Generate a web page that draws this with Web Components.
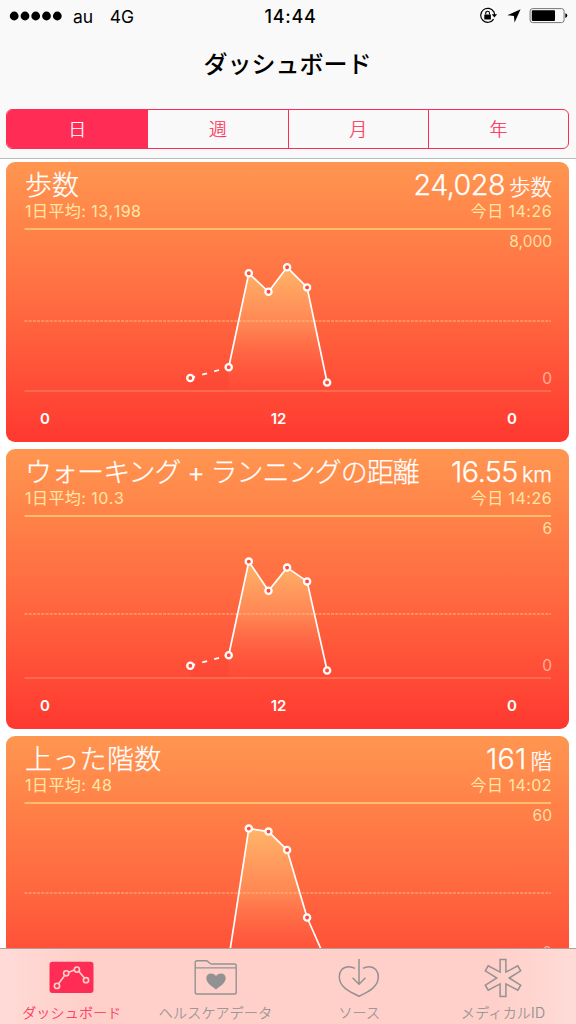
<!DOCTYPE html>
<html lang="ja">
<head>
<meta charset="utf-8">
<title>ダッシュボード</title>
<style>
    html, body {
        margin: 0;
        height: 100%;
    }

    body {
        background: #fff;
        overflow: hidden;
        font-family: Inter, "Noto Sans CJK JP", sans-serif;
        --pink: #ff2d55;
    }
</style>
</head>
<body>
<health-app>
    <status-bar slot="top" carrier="au" network="4G" time="14:44"></status-bar>
    <nav-title slot="top">ダッシュボード</nav-title>
    <segmented-control slot="top" items="日,週,月,年" selected="0"></segmented-control>

    <health-card name="歩数" value="24,028" unit="歩数" average="13,198" date="14:26" max="8,000"
        mid="92" points="165.8,149 204.2,138.3 224.3,44.3 244,62.8 262.6,38.3 282.6,58.4 302.6,153.5"></health-card>
    <health-card style="--name-spacing: -0.95px" name="ウォーキング + ランニングの距離" value="16.55" unit="km" average="10.3" date="14:26" max="6"
        mid="98" points="165.8,149.7 204.2,139.2 224.3,45.6 244,74.7 262.6,51.6 282.6,65.4 302.6,154.5"></health-card>
    <health-card style="--name-spacing: 0.3px; --value-spacing: 0.2px" name="上った階数" value="161" unit="階" average="48" date="14:02" max="60"
        mid="90" points="165.8,160 204.2,156 224.3,25.6 244,28.6 262.6,47 282.6,114.5 302.6,160"></health-card>

    <tab-item slot="tabs" icon="dashboard" active>ダッシュボード</tab-item>
    <tab-item slot="tabs" icon="data">ヘルスケアデータ</tab-item>
    <tab-item slot="tabs" icon="source">ソース</tab-item>
    <tab-item slot="tabs" icon="medical">メディカルID</tab-item>
</health-app>

<script>
class BaseElement extends HTMLElement {

    constructor() {
        super();
        this.attachShadow({ mode: 'open' });
    }

    connectedCallback() {
        this.shadowRoot.innerHTML = this.render();
    }

    attr(name) {
        return this.getAttribute(name) || '';
    }
}

class HealthApp extends BaseElement {
    render() {
        return /*html*/`
        <style>
            :host {
                display: flex;
                flex-direction: column;
                width: 576px;
                height: 1024px;
            }
            header {
                flex: none;
                box-sizing: border-box;
                height: 159px;
                background: #f9f9f9;
                border-bottom: 1px solid #b9b9b9;
            }
            main {
                flex: 1;
                min-height: 0;
                overflow: hidden;
                display: flex;
                flex-direction: column;
                gap: 6.5px;
                padding: 2.5px 7px 0 6px;
            }
            footer {
                flex: none;
                box-sizing: border-box;
                height: 76px;
                display: grid;
                grid-template-columns: repeat(4, 1fr);
                padding-right: 1px;
                border-top: 1px solid #b39c9a;
                background: linear-gradient(90deg, #ffdbd7, #ffd0ca 14%, #ffd0ca 86%, #ffdbd7);
            }
        </style>
        <header><slot name="top"></slot></header>
        <main><slot></slot></main>
        <footer><slot name="tabs"></slot></footer>`;
    }
}

class StatusBar extends BaseElement {
    render() {
        return /*html*/`
        <style>
            :host {
                display: grid;
                grid-template-columns: 1fr auto 1fr;
                align-items: center;
                height: 32px;
                padding: 0 8px 0 9px;
                font-size: 17.5px;
                color: #000;
            }
            .left, .right { display: flex; align-items: center; }
            .right { justify-content: flex-end; }
            .carrier { margin: 0 16.5px 0 10px; }
            .time { font-weight: 500; letter-spacing: 0.7px; font-size: 18px; padding-left: 4px; }
            svg { display: block; }
        </style>
        <div class="left">
            <svg width="54" height="10" viewBox="0 0 54 10">
                <circle cx="5.2" cy="5" r="4.4"/><circle cx="16" cy="5" r="4.4"/><circle cx="26.7" cy="5" r="4.4"/>
                <circle cx="37.5" cy="5" r="4.4"/><circle cx="48.3" cy="5" r="4.4"/>
            </svg>
            <span class="carrier">${this.attr('carrier')}</span>
            <span>${this.attr('network')}</span>
        </div>
        <span class="time">${this.attr('time')}</span>
        <div class="right">
            <svg width="90" height="18" viewBox="478 7 90 18">
                <path d="M493.8 12.2A7 7 0 1 0 493.6 19.4" transform="translate(0 -.3)" fill="none" stroke="#000" stroke-width="1.2"/>
                <path d="M493.6 11.2Q494.6 13 494.6 15" fill="none" stroke="#000" stroke-width="1.2"/>
                <path d="M491.7 14.2h5.4l-2.7 3.3z"/>
                <rect x="484.3" y="14.6" width="6.6" height="4.8" rx=".4"/>
                <path d="M485.7 14.6v-1.5a1.9 1.9 0 0 1 3.8 0v1.5" fill="none" stroke="#000" stroke-width="1.1"/>
                <path d="M520.6 9.3L514.6 22.6 513.9 16.1 507.3 15.2z"/>
                <rect x="530.1" y="8.6" width="34" height="14" rx="2.6" fill="none" stroke="#777" stroke-width="1"/>
                <rect x="531.8" y="10.3" width="23.2" height="10.6" rx=".8"/>
                <path d="M565.3 13.2q2 .5 2 2.4t-2 2.4z"/>
            </svg>
        </div>`;
    }
}

class NavTitle extends BaseElement {
    render() {
        return /*html*/`
        <style>
            :host {
                display: flex;
                align-items: center;
                justify-content: center;
                box-sizing: border-box;
                height: 64px;
                padding: 0 1px 3px 0;
                font-size: 24px;
                font-weight: 500;
                color: #000;
            }
        </style>
        <slot></slot>`;
    }
}

class SegmentedControl extends BaseElement {
    render() {
        const selected = Number(this.attr('selected'));
        const items = this.attr('items').split(',')
            .map((item, i) => `<span class="${i === selected ? 'on' : ''}">${item}</span>`)
            .join('');
        return /*html*/`
        <style>
            :host {
                display: grid;
                grid-template-columns: repeat(4, 1fr);
                box-sizing: border-box;
                height: 40px;
                margin: 13px 7px 0 6px;
                border: 1px solid var(--pink);
                border-radius: 6px;
                overflow: hidden;
                font-size: 18px;
                font-weight: 300;
                -webkit-text-stroke: 0.2px;
                color: var(--pink);
            }
            span { display: flex; align-items: center; justify-content: center; padding-bottom: 2px; }
            span + span { border-left: 1px solid var(--pink); }
            .on { background: var(--pink); color: #fff; }
        </style>
        ${items}`;
    }
}

class HealthCard extends BaseElement {
    render() {
        const points = this.attr('points').split(' ').map(p => p.split(',').map(Number));
        const solid = points.slice(1);
        const line = solid.map(p => p.join(' ')).join('L');
        const top = Math.min(...solid.map(p => p[1]));
        const [a, b] = points;
        const dots = points.map(([x, y]) => `<circle cx="${x}" cy="${y}" r="3.1"/>`).join('');
        return /*html*/`
        <style>
            :host {
                display: flex;
                flex-direction: column;
                flex: none;
                box-sizing: border-box;
                height: 280.5px;
                padding: 0 18px;
                border-radius: 9px;
                background: linear-gradient(#ff9650, #ff6a40 52%, #ff3830);
                color: #fff;
            }
            .head { height: 67px; display: flex; flex-direction: column; padding-left: 1px; margin-right: -1px; }
            .row { display: flex; justify-content: space-between; align-items: baseline; white-space: nowrap; }
            .title { height: 39.5px; line-height: 46px; font-weight: 300; -webkit-text-stroke: 0.25px; }
            .name { font-size: 27px; letter-spacing: var(--name-spacing, 0); }
            .value { font-size: 28.7px; letter-spacing: var(--value-spacing, -0.5px); }
            .unit { font-size: 21.5px; margin-left: 4px; }
            .sub { height: 20px; line-height: 20px; font-size: 16px; letter-spacing: 0.45px; font-kerning: none; color: #ffe7a6; }
            svg { display: block; flex: none; overflow: visible; }
            .chart { display: grid; width: 527px; }
            .chart > * { grid-area: 1 / 1; }
            .scale {
                display: flex;
                flex-direction: column;
                justify-content: space-between;
                align-items: flex-end;
                height: 162px;
                box-sizing: border-box;
                margin-right: -1px;
                padding: 3px 0 2px;
                font-size: 15.5px;
                line-height: 20px;
                color: #ffdfa3;
            }
            .min { color: #ffb196; }
            .hours {
                display: flex;
                justify-content: space-between;
                padding: 18px 34px 0 16px;
                font-size: 15px;
                line-height: 20px;
                font-weight: 600;
            }
        </style>
        <div class="head">
            <div class="row title">
                <span class="name">${this.attr('name')}</span>
                <span><span class="value">${this.attr('value')}</span><span class="unit">${this.attr('unit')}</span></span>
            </div>
            <div class="row sub">
                <span>1日平均: ${this.attr('average')}</span>
                <span>今日 ${this.attr('date')}</span>
            </div>
        </div>
        <div class="chart">
            <svg width="527" height="162" viewBox="0 0 527 162">
                <defs>
                    <linearGradient id="fill" gradientUnits="userSpaceOnUse" x1="0" y1="${top}" x2="0" y2="158">
                        <stop offset="0" stop-color="#ffc070" stop-opacity=".85"/>
                        <stop offset=".5" stop-color="#ff9a60" stop-opacity=".6"/>
                        <stop offset="1" stop-color="#ff5040" stop-opacity=".1"/>
                    </linearGradient>
                </defs>
                <path d="M.5 0H527" stroke="#ffd27c" stroke-width="1.4"/>
                <path d="M.5 162H527" stroke="#ff8a68" stroke-width="1.2"/>
                <g transform="translate(.5 0)">
                    <path d="M${a.join(' ')}L${b.join(' ')}V161H${a[0]}z" fill="#f03030" fill-opacity=".12"/>
                    <path d="M${line}L${solid[0][0]} 158z" fill="url(#fill)"/>
                    <path d="M0 ${this.attr('mid')}H526.5" stroke="#ffba82" stroke-width="1" stroke-dasharray="3 1.2"/>
                    <path d="M${a.join(' ')}L${b.join(' ')}" fill="none" stroke="#fff" stroke-width="1.8" stroke-dasharray="5 7.4" stroke-dashoffset="-12.4"/>
                    <path d="M${line}" fill="none" stroke="#fff" stroke-width="1.7"/>
                    <g fill="#ff4a38" stroke="#fff" stroke-width="2.3">${dots}</g>
                </g>
            </svg>
            <div class="scale"><span>${this.attr('max')}</span><span class="min">0</span></div>
        </div>
        <div class="hours"><span>0</span><span>12</span><span>0</span></div>`;
    }
}

const icons = {
    dashboard: /*html*/`
        <rect x="1.5" y="5.7" width="44" height="31.3" rx="3" fill="currentColor"/>
        <g fill="none" stroke="#ffd0ca" stroke-width="1.6">
            <path d="M10.5 27.7L16.7 19.4M20.8 16.3L26.4 14M31 15.4L36.4 22.1"/>
            <circle cx="9" cy="29.9" r="2.6"/><circle cx="18.2" cy="17.3" r="2.6"/>
            <circle cx="28.9" cy="13.6" r="2.6"/><circle cx="38" cy="24.2" r="2.6"/>
        </g>`,
    data: /*html*/`
        <g fill="none" stroke="currentColor" stroke-width="1.4">
            <path d="M3.2 36.2V6.5Q3.2 4.7 5 4.7H14Q15.3 4.7 16.2 5.7L17.6 7.1Q18.4 8 19.6 8H42.4Q44.2 8 44.2 9.8V36.2Q44.2 38 42.4 38H5Q3.2 38 3.2 36.2zM3.2 11.9H44.2"/>
        </g>
        <path d="M24 33.4C19 30 14.3 26.7 14.3 22.3C14.3 19.3 16.3 17.4 18.9 17.4C21.2 17.4 23 18.5 24 20.1C25 18.5 26.8 17.4 29.1 17.4C31.7 17.4 33.7 19.3 33.7 22.3C33.7 26.7 29 30 24 33.4z" fill="currentColor"/>`,
    source: /*html*/`
        <g fill="none" stroke="currentColor" stroke-width="1.5">
            <path d="M20 12.3C18.2 11.3 16 10.7 13.7 10.7C8 10.7 4.3 14.9 4.3 21C4.3 30.5 13.5 35.6 24 40.2C34.5 35.6 43.3 30.5 43.3 21C43.3 14.9 39.6 10.7 33.9 10.7C31.8 10.7 29.6 11.3 27.8 12.3"/>
            <path d="M24 3V28M17.6 21.8L24 28.2 30.4 21.8"/>
        </g>`,
    medical: /*html*/`
        <path d="M21.1 3.5H26.9V16.1L38.8 9.8 41.7 14.8 30.2 22 41.7 29.2 38.8 34.2 26.9 27.9V40.5H21.1V27.9L9.2 34.2 6.3 29.2 17.8 22 6.3 14.8 9.2 9.8 21.1 16.1z" fill="none" stroke="currentColor" stroke-width="1.5"/>`
};

class TabItem extends BaseElement {
    render() {
        return /*html*/`
        <style>
            :host {
                display: flex;
                flex-direction: column;
                align-items: center;
                padding-top: 7px;
                font-size: 14px;
                font-weight: 300;
                line-height: 18px;
                letter-spacing: 0.2px;
                -webkit-text-stroke: 0.2px;
                color: #929292;
                white-space: nowrap;
            }
            :host([active]) { color: var(--pink); }
            svg { display: block; margin-bottom: 4px; }
        </style>
        <svg width="48" height="44" viewBox="0 0 48 44">${icons[this.attr('icon')]}</svg>
        <span><slot></slot></span>`;
    }
}

window.customElements.define('health-app', HealthApp);
window.customElements.define('status-bar', StatusBar);
window.customElements.define('nav-title', NavTitle);
window.customElements.define('segmented-control', SegmentedControl);
window.customElements.define('health-card', HealthCard);
window.customElements.define('tab-item', TabItem);
</script>
</body>
</html>
